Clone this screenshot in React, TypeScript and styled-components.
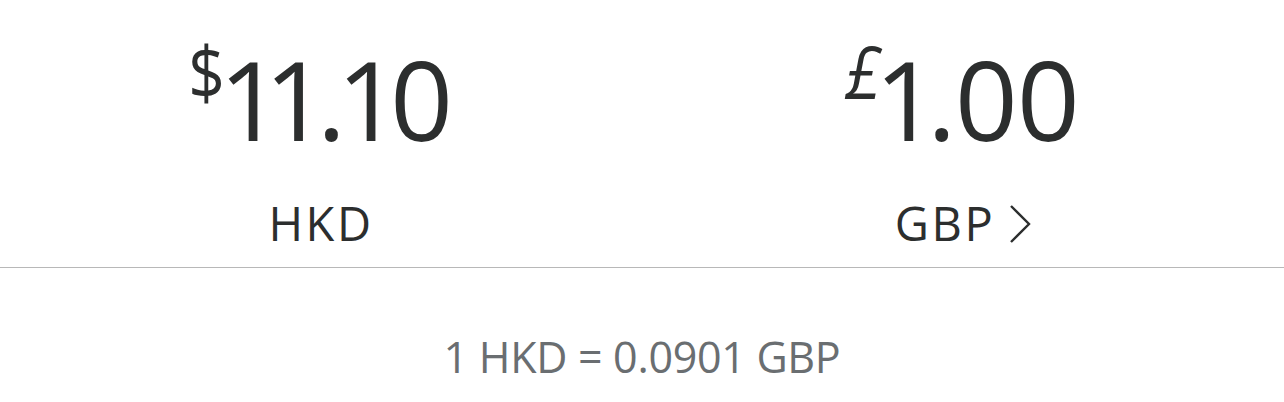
import React from "react";
import styled, { createGlobalStyle } from "styled-components";

const Global = createGlobalStyle`
  html, body { margin: 0; padding: 0; background: #ffffff; }
  body { font-family: "Open Sans", "Noto Sans", sans-serif; }
`;

const Page = styled.div`
  width: 1284px;
  height: 402px;
  display: flex;
  flex-direction: column;
  background: #fff;
  color: #2c2e2e;
`;

const Pair = styled.div`
  display: grid;
  grid-template-columns: 1fr 1fr;
  height: 268px;
  border-bottom: 1px solid #b8b8b8;
  box-sizing: border-box;
`;

const Side = styled.div`
  display: flex;
  flex-direction: column;
  align-items: center;
  padding-top: 43px;
`;

const Amount = styled.div`
  display: flex;
  align-items: flex-start;
  height: 110px;
`;

const Symbol = styled.span<{ $slant?: boolean }>`
  font-size: 64px;
  line-height: 1;
  margin-top: -8px;
  margin-right: 1px;
  font-style: ${(p) => (p.$slant ? "italic" : "normal")};
  transform: scaleY(1.15);
  transform-origin: top center;
`;

const Value = styled.span`
  font-size: 110px;
  line-height: 1;
  letter-spacing: -2px;
  margin-right: 2px;
  font-variant-numeric: proportional-nums;
`;

const Code = styled.div`
  display: flex;
  align-items: center;
  gap: 14px;
  margin-top: 47px;
  font-size: 47px;
  line-height: 1;
  letter-spacing: 2.5px;
`;

const Rate = styled.div`
  padding-top: 67px;
  text-align: center;
  font-size: 43px;
  line-height: 1;
  letter-spacing: -0.3px;
  color: #6a6e71;
`;

const Chevron = () => (
  <svg width="22" height="40" viewBox="0 0 22 40" fill="none">
    <path d="M2 2 L20 20 L2 38" stroke="#2c2e2e" strokeWidth="2.4" />
  </svg>
);

export default function App() {
  return (
    <Page>
      <Global />
      <Pair>
        <Side>
          <Amount>
            <Symbol>$</Symbol>
            <Value>11.10</Value>
          </Amount>
          <Code>HKD</Code>
        </Side>
        <Side>
          <Amount>
            <Symbol $slant>£</Symbol>
            <Value>1.00</Value>
          </Amount>
          <Code>
            GBP
            <Chevron />
          </Code>
        </Side>
      </Pair>
      <Rate>1 HKD = 0.0901 GBP</Rate>
    </Page>
  );
}
